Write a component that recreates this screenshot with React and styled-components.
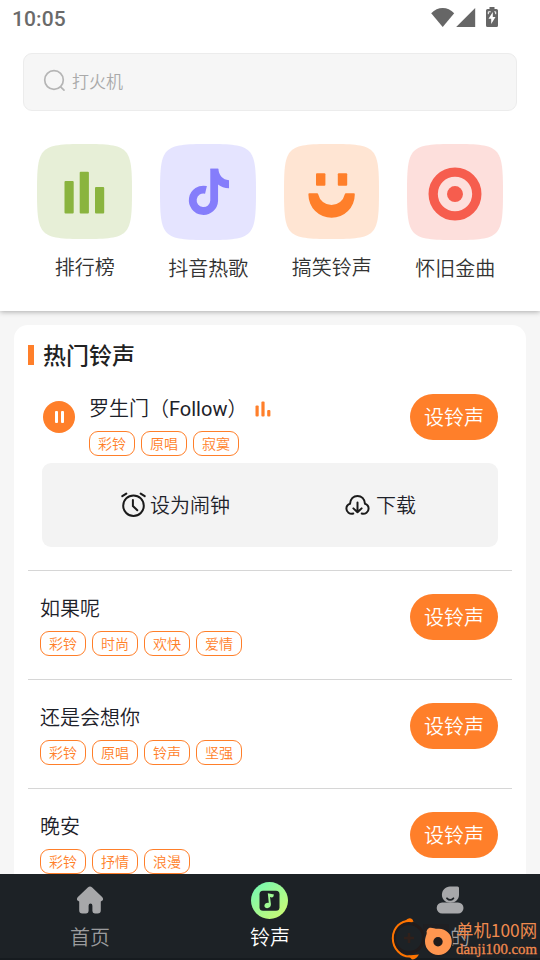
import styled, { createGlobalStyle, css } from "styled-components";

const GlobalStyle = createGlobalStyle`
   * {
      box-sizing: border-box;
   }
   body {
      margin: 0;
      background: #f6f6f6;
      font-family: Roboto, "Noto Sans CJK SC DemiLight", "Noto Sans CJK SC", sans-serif;
      font-weight: 400;
   }
`;
const Screen = styled.div`
   display: flex;
   flex-direction: column;
   width: 540px;
   height: 960px;
   overflow: hidden;
   background: #f6f6f6;
`;
const Header = styled.header`
   position: relative;
   flex-shrink: 0;
   height: 311px;
   background: #ffffff;
   box-shadow: 0 1px 5px rgba(0, 0, 0, 0.3);
`;
const StatusBar = styled.div`
   display: flex;
   justify-content: space-between;
   height: 53px;
   padding: 6px 41px 0 12px;
`;
const Clock = styled.span`
   font-size: 21px;
   line-height: 26px;
   font-weight: 500;
   letter-spacing: 0.1px;
   color: #6a6a6a;
`;
const SearchBox = styled.div`
   display: flex;
   align-items: center;
   column-gap: 6px;
   height: 58px;
   margin: 0 23px;
   padding: 0 0 3px 19px;
   border: 1px solid #ececec;
   border-radius: 9px;
   background: #f6f6f6;
   font-size: 17px;
   color: #aaaaaa;
`;
const Categories = styled.div`
   display: grid;
   grid-template-columns: repeat(4, 1fr);
   padding: 33px 23px 0;
`;
const Category = styled.div`
   display: flex;
   flex-direction: column;
   align-items: center;
   row-gap: 14px;
   font-size: 20px;
   line-height: 30px;
   color: #333333;
`;
const Panel = styled.main`
   flex: 1;
   min-height: 0;
   margin: 14px 14px 0;
   padding: 0 14px;
   overflow: hidden;
   border-radius: 14px 14px 0 0;
   background: #ffffff;
`;
const PanelTitle = styled.h2`
   display: flex;
   align-items: center;
   column-gap: 9px;
   height: 45px;
   margin: 0;
   padding-top: 19px;
   font-family: Roboto, "Noto Sans CJK SC", sans-serif;
   font-size: 23px;
   line-height: 26px;
   font-weight: 500;
   color: #222222;

   &::before {
      content: "";
      width: 6px;
      height: 20px;
      margin-top: -4px;
      background: #ff7f2a;
   }
`;
const Song = styled.div`
   height: ${(props) => (props.active ? "201px" : "109px")};
   border-bottom: 1px solid #d6d6d6;

   ${(props) =>
      props.last &&
      css`
         border-bottom: 0;
      `};
`;
const SongRow = styled.div`
   display: flex;
   align-items: flex-start;
   height: ${(props) => (props.active ? "93px" : "108px")};
   padding: ${(props) => (props.active ? "24px 14px 0 15px" : "23px 14px 0 12px")};
`;
const SongInfo = styled.div`
   flex: 1;
   margin-left: ${(props) => (props.active ? "14px" : "0")};
   margin-top: -1px;
`;
const SongName = styled.div`
   display: flex;
   align-items: center;
   height: 30px;
   padding-top: 2px;
   font-size: 20px;
   line-height: 30px;
   color: #1d2129;
`;
const Tags = styled.div`
   display: flex;
   column-gap: 6px;
   margin-top: 8px;
`;
const Tag = styled.span`
   display: flex;
   align-items: center;
   justify-content: center;
   width: 46px;
   height: 25px;
   border: 1px solid #ff7f2a;
   border-radius: 9px;
   font-size: 14px;
   line-height: 20px;
   color: #ff7f2a;
`;
const SetButton = styled.button`
   width: 88px;
   height: 46px;
   padding: 0;
   border: 0;
   border-radius: 23px;
   background: #ff7f2a;
   font: inherit;
   font-size: 20px;
   line-height: 48px;
   color: #ffffff;
`;
const PauseButton = styled.div`
   display: flex;
   align-items: center;
   justify-content: center;
   column-gap: 3px;
   width: 32px;
   height: 32px;
   margin-top: 7px;
   border-radius: 50%;
   background: #ff7f2a;

   &::before,
   &::after {
      content: "";
      width: 3px;
      height: 12px;
      border-radius: 1px;
      background: #ffffff;
   }
`;
const Actions = styled.div`
   display: grid;
   grid-template-columns: 1fr 1fr;
   padding: 0 15px 0 31px;
   height: 84px;
   margin: 0 14px;
   border-radius: 9px;
   background: #f3f3f3;
`;
const Action = styled.div`
   display: flex;
   align-items: center;
   justify-content: center;
   column-gap: ${(props) => props.gap || "4px"};
   padding-top: 2px;
   font-size: 20px;
   line-height: 30px;
   color: #1d2129;

   svg {
      margin-top: -2px;
   }
`;
const TabBar = styled.nav`
   position: relative;
   flex-shrink: 0;
   display: grid;
   grid-template-columns: repeat(3, 1fr);
   height: 86px;
   border-bottom: 2px solid #161b1f;
   background: #1d2226;
`;
const Tab = styled.div`
   display: flex;
   flex-direction: column;
   align-items: center;
   font-size: 20px;
   line-height: 32px;
   color: ${(props) => (props.active ? "#ffffff" : "#9b9c9e")};
`;
const TabIcon = styled.span`
   display: flex;
   align-items: center;
   justify-content: center;
   height: 48px;
   padding: 4px 1px 0 0;
`;
const Watermark = styled.div`
   position: absolute;
   right: 0;
   bottom: -2px;
   display: flex;
   width: 150px;
   height: 43px;
`;
const WatermarkText = styled.div`
   display: flex;
   flex-direction: column;
   margin-left: 1px;
   white-space: nowrap;
   color: #f08a4e;
`;
const WatermarkName = styled.span`
   font-family: "Noto Sans CJK SC", sans-serif;
   font-size: 17.4px;
   line-height: 24px;
   margin-top: 1px;
`;
const WatermarkSite = styled.span`
   font-family: "Liberation Serif", serif;
   font-size: 14.8px;
   line-height: 14px;
   -webkit-text-stroke: 0.3px #f08a4e;
`;

const Squircle = ({ color }) => (
   <path
      fill={color}
      d="M0 47.5C0 2.8 2.8 0 47.5 0S95 2.8 95 47.5 92.2 95 47.5 95 0 92.2 0 47.5z"
   />
);

const categories = [
   {
      name: "排行榜",
      size: 95,
      background: "#e7efd7",
      icon: (
         <g fill="#8ab43f">
            <rect x="27.500" y="37" width="9.200" height="32.500" rx="1" />
            <rect x="42.700" y="27.700" width="9.200" height="41.800" rx="1" />
            <rect x="58" y="43" width="9.200" height="26.500" rx="1" />
         </g>
      ),
   },
   {
      name: "抖音热歌",
      size: 96,
      background: "#e5e4ff",
      icon: (
         <g fill="none" stroke="#857dfb" strokeWidth="7.700">
            <path d="M45.500 45.400A10.600 10.600 0 1 0 53.600 56V24.600" />
            <path
               d="M49.800 24.600h8c.2 6 4.300 11.200 10.500 11.200v8c-4.400 0-8-1.200-10.900-3.600z"
               fill="#857dfb"
               stroke="none"
            />
         </g>
      ),
   },
   {
      name: "搞笑铃声",
      size: 95,
      background: "#ffe5d3",
      icon: (
         <g fill="#ff7f2a">
            <rect x="32" y="29.200" width="9.400" height="12.600" rx="1" />
            <rect x="53.800" y="29.200" width="9.400" height="12.600" rx="1" />
            <path d="M25.400 49.300h7.600q1 0 1.200 1a13.600 13.600 0 0 0 26.600 0q.2-1 1.200-1h7.800q1.200 0 1 1.300a23.200 23.200 0 0 1-46.400 0q-.2-1.300 1-1.300z" />
         </g>
      ),
   },
   {
      name: "怀旧金曲",
      size: 96,
      background: "#fddfdc",
      icon: (
         <g>
            <circle
               cx="47.500"
               cy="49.500"
               r="21.600"
               fill="none"
               stroke="#f65d4e"
               strokeWidth="9.200"
            />
            <circle cx="47.500" cy="49.500" r="7.900" fill="#f65d4e" />
         </g>
      ),
   },
];

const songs = [
   { name: "罗生门（Follow）", tags: ["彩铃", "原唱", "寂寞"], active: true },
   { name: "如果呢", tags: ["彩铃", "时尚", "欢快", "爱情"] },
   { name: "还是会想你", tags: ["彩铃", "原唱", "铃声", "坚强"] },
   { name: "晚安", tags: ["彩铃", "抒情", "浪漫"] },
];

const StatusIcons = () => (
   <svg width="68" height="22" viewBox="0 0 68 22" fill="#666666">
      <path d="M.2 7.300C3.600 3.700 7.500 2 11.700 2s8.100 1.700 11.500 5.300L11.700 21z" />
      <path d="M44.200 2v19H25.200z" />
      <path
         fillRule="evenodd"
         d="M58.500 1h5v2h2q1.500 0 1.500 1.500v15q0 1.500-1.500 1.500h-9q-1.500 0-1.500-1.500v-15Q55 3 56.500 3h2zM61.800 6l-4.300 6.800h2.700V18l4.300-7h-2.700z"
      />
      <path
         d="M57.300 8.200V5.800h2.400M64.700 8.200V5.800h-1.400"
         fill="none"
         stroke="#ffffff"
         strokeWidth="1"
      />
   </svg>
);

const SearchIcon = () => (
   <svg
      width="23"
      height="23"
      viewBox="0 0 23 23"
      fill="none"
      stroke="#b5b5b5"
      strokeWidth="1.700"
      strokeLinecap="round"
   >
      <circle cx="11" cy="11" r="9.300" />
      <path d="M17.600 17.800l3.400 3.400" />
   </svg>
);

const PlayingIcon = () => (
   <svg width="16" height="16" viewBox="0 0 16 16" style={{ marginLeft: 8 }}>
      <g fill="#ff7f2a">
         <rect x=".5" y="4.500" width="3.200" height="11" rx="1" />
         <rect x="6.400" y=".5" width="3.200" height="15" rx="1" />
         <rect x="12.200" y="9" width="3.200" height="6.500" rx="1" />
      </g>
   </svg>
);

const AlarmIcon = () => (
   <svg
      width="25"
      height="26"
      viewBox="0 0 25 26"
      fill="none"
      stroke="#1a1a1a"
      strokeWidth="2"
      strokeLinecap="round"
   >
      <circle cx="12.500" cy="13.700" r="10.300" />
      <path d="M11.900 8v6l4.400 4.300" />
      <path d="M1.300 4.200l4-2.600M19.700 1.600l4 2.600" />
   </svg>
);

const DownloadIcon = () => (
   <svg
      width="25"
      height="22"
      viewBox="0 0 25 22"
      fill="none"
      stroke="#1a1a1a"
      strokeWidth="2"
      strokeLinecap="round"
      strokeLinejoin="round"
   >
      <path d="M8.300 19.600c-3.800.8-6.800-1.600-6.900-4.800 0-2.500 1.400-4.300 3.600-5C5.400 5 8.600 1.900 12.500 1.900S19.600 5 20 9.800c2.200.7 3.600 2.500 3.600 5-.1 3.200-3.100 5.600-6.900 4.800" />
      <path d="M12.500 8.500v9.700M8.400 14.400l4.100 3.900 4.100-3.900" />
   </svg>
);

const HomeIcon = () => (
   <svg width="28" height="28" viewBox="0 0 28 28" fill="#a7a8aa">
      <path d="M11.800 1.400q2.200-1.900 4.400 0l9.900 9.700q2 2.300-.1 3.700l-1.200.8v8.700q0 3.200-3.200 3.200h-2.800q-2.400 0-2.400-2.400v-5.300q0-2.200-1.900-2.200t-1.900 2.200v5.300q0 2.400-2.400 2.400H6.400q-3.200 0-3.200-3.200v-8.700L2 14.800q-2.100-1.400-.1-3.700z" />
   </svg>
);

const RingIcon = () => (
   <svg width="37" height="37" viewBox="0 0 37 37">
      <defs>
         <linearGradient id="ring" x1="0.150" y1="0.150" x2="0.800" y2="0.900">
            <stop offset="0" stopColor="#7df9ac" />
            <stop offset="1" stopColor="#c5fa78" />
         </linearGradient>
      </defs>
      <circle cx="18.500" cy="18.500" r="18.500" fill="url(#ring)" />
      <rect x="8.500" y="8.700" width="20" height="20" rx="3.500" fill="#1d2226" />
      <path
         d="M16.800 11.200l6.200 1.400q-.2 2.700-2.300 2.900l-1.700-.5.900 6.800c.5 5.300-6.600 5.600-6.500 1.900.1-2 2.200-3.200 4.400-2.800z"
         fill="#a0fa94"
      />
   </svg>
);

const UserIcon = () => (
   <svg width="28" height="28" viewBox="0 0 28 28">
      <path
         d="M14 .5h7.500q1.500 0 1.500 1.500v6.800c0 4.500-3.700 8-8.600 8S5.900 13.300 5.900 8.800 9.500.5 14 .5z"
         fill="#a7a8aa"
      />
      <rect x=".7" y="16.500" width="26.800" height="11" rx="5.500" fill="#a7a8aa" />
      <path
         d="M11 12.300q3.200 3.200 6.400 0"
         fill="none"
         stroke="#1d2226"
         strokeWidth="1.800"
         strokeLinecap="round"
      />
   </svg>
);

const WatermarkLogo = styled(({ className }) => (
   <svg
      className={className}
      width="65"
      height="43"
      viewBox="0 0 65 43"
      fill="none"
   >
      <circle cx="19" cy="21" r="14.500" stroke="#211b1b" strokeWidth="3" />
      <path d="M14 21h10M19 16v10" stroke="#30201b" strokeWidth="2.500" />
      <path
         d="M22.500 4.300C11 2 2.800 11 2.800 21.300S11 40.300 20.500 39.500"
         stroke="#ff7400"
         strokeWidth="2"
      />
      <path
         d="M15 4Q19-.8 22.500 2.500L23.500 5Q18 3.500 15 4zM18 38.500l11-1Q26 42.500 22 42.500z"
         fill="#ff7400"
      />
      <path
         d="M33 7H59V14c3 3 4 6 4 11a14 14 0 0 1-29 0q0-6-1-18z"
         fill="#1e1f22"
      />
      <path
         d="M39 11c3-1 5 1 10 .8 7 .2 12.800 5.500 12.800 12.800a13.400 13.400 0 0 1-26.800 0c0-5 2.500-7.600 1.500-10q.5-2.600 2.500-3.600z"
         fill="#ff9650"
      />
      <circle cx="48" cy="24.800" r="4.700" fill="#211b1b" />
   </svg>
))`
   flex-shrink: 0;
`;

const SongItem = ({ song, last }) => (
   <Song active={song.active} last={last}>
      <SongRow active={song.active}>
         {song.active && <PauseButton />}
         <SongInfo active={song.active}>
            <SongName>
               {song.name}
               {song.active && <PlayingIcon />}
            </SongName>
            <Tags>
               {song.tags.map((tag) => (
                  <Tag key={tag}>{tag}</Tag>
               ))}
            </Tags>
         </SongInfo>
         <SetButton>设铃声</SetButton>
      </SongRow>
      {song.active && (
         <Actions>
            <Action>
               <AlarmIcon />
               设为闹钟
            </Action>
            <Action gap="6px">
               <DownloadIcon />
               下载
            </Action>
         </Actions>
      )}
   </Song>
);

const App = () => {
   return (
      <>
         <GlobalStyle />
         <Screen>
            <Header>
               <StatusBar>
                  <Clock>10:05</Clock>
                  <StatusIcons />
               </StatusBar>
               <SearchBox>
                  <SearchIcon />
                  打火机
               </SearchBox>
               <Categories>
                  {categories.map((item) => (
                     <Category key={item.name}>
                        <svg
                           width={item.size}
                           height={item.size}
                           viewBox="0 0 95 95"
                        >
                           <Squircle color={item.background} />
                           {item.icon}
                        </svg>
                        {item.name}
                     </Category>
                  ))}
               </Categories>
            </Header>
            <Panel>
               <PanelTitle>热门铃声</PanelTitle>
               {songs.map((song, index) => (
                  <SongItem
                     key={song.name}
                     song={song}
                     last={index === songs.length - 1}
                  />
               ))}
            </Panel>
            <TabBar>
               <Tab>
                  <TabIcon>
                     <HomeIcon />
                  </TabIcon>
                  首页
               </Tab>
               <Tab active>
                  <TabIcon>
                     <RingIcon />
                  </TabIcon>
                  铃声
               </Tab>
               <Tab>
                  <TabIcon>
                     <UserIcon />
                  </TabIcon>
                  我的
               </Tab>
               <Watermark>
                  <WatermarkLogo />
                  <WatermarkText>
                     <WatermarkName>单机100网</WatermarkName>
                     <WatermarkSite>danji100.com</WatermarkSite>
                  </WatermarkText>
               </Watermark>
            </TabBar>
         </Screen>
      </>
   );
};
export default App;
